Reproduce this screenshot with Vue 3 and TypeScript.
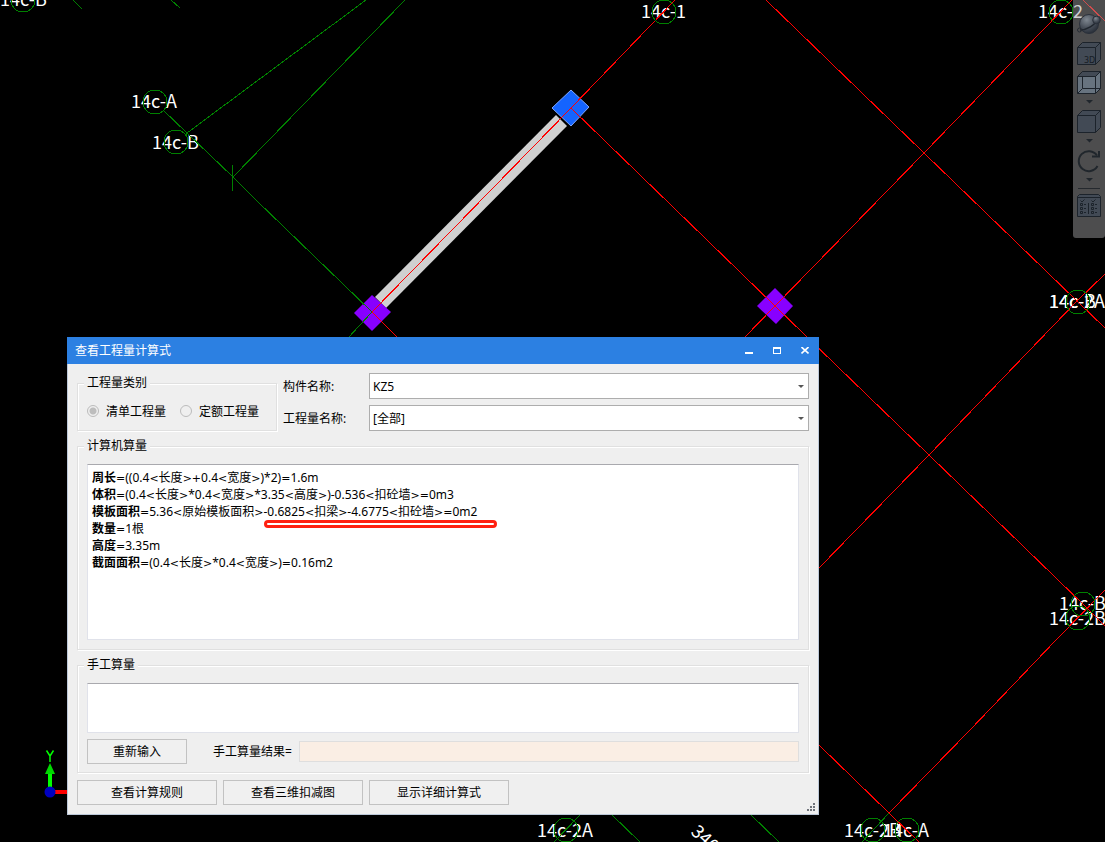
<script setup lang="ts">
import { ref } from 'vue'

interface Formula {
  name: string
  body: string
  marked?: string
}
interface Token {
  text: string
  sign: boolean
}

const component = ref('KZ5')
const quantity = ref('[全部]')
const manual = ref('')
const result = ref('')

const formulas: Formula[] = [
  { name: '周长', body: '=((0.4<长度>+0.4<宽度>)*2)=1.6m' },
  { name: '体积', body: '=(0.4<长度>*0.4<宽度>*3.35<高度>)-0.536<扣砼墙>=0m3' },
  { name: '模板面积', body: '=5.36<原始模板面积>', marked: '-0.6825<扣梁>-4.6775<扣砼墙>=0m2' },
  { name: '数量', body: '=1根' },
  { name: '高度', body: '=3.35m' },
  { name: '截面面积', body: '=(0.4<长度>*0.4<宽度>)=0.16m2' },
]

function tokens(source: string): Token[] {
  return source
    .split(/([<>=+])/)
    .filter((t) => t !== '')
    .map((t) => ({ text: t, sign: /^[<>=+]$/.test(t) }))
}

const redLines = [
  '675,0 571,108 372,312',
  '571,108 775,306 929,455 1087,608 1105,626',
  '372,312 397,337',
  '819,745 889,813 919,842',
  '766,0 924,153 1077,301 1105,328',
  '1072,0 924,153 775,306 744,338',
  '1105,274 1077,301 929,455 819,568',
  '1105,590 1056,640 970,730 889,813',
  '1083,0 1105,21',
]
const greenLines = [
  '366,0 187,133',
  '405,0 233,177',
  '163,110 187,133 233,177 256,200 372,312 348,338',
  '232,165 232,191',
  '185,135 188,133',
  '73,0 82,9',
  '171,0 180,8',
  '580,815 554,842',
  '612,815 640,842',
  '751,815 779,842',
  '889,813 862,842',
]
const circles = [
  [23, 0], [155, 102], [176, 142], [664, 12], [1061, 12], [1078, 302],
  [1083, 604], [1078, 618], [566, 830], [873, 830], [907, 830],
]
const labels = [
  { x: 0, y: 6, text: '14c-B' },
  { x: 131, y: 108, text: '14c-A' },
  { x: 152, y: 149, text: '14c-B' },
  { x: 641, y: 18, text: '14c-1' },
  { x: 1038, y: 18, text: '14c-2' },
  { x: 1049, y: 308, text: '14c-B' },
  { x: 1049, y: 308, text: '14c-2A' },
  { x: 1059, y: 610, text: '14c-B' },
  { x: 1049, y: 625, text: '14c-2B' },
  { x: 537, y: 837, text: '14c-2A' },
  { x: 844, y: 837, text: '14c-2B' },
  { x: 883, y: 837, text: '14c-A' },
]
</script>

<template>
  <main class="stage">
    <svg class="drawing" aria-label="轴网平面图">
      <polygon class="wall" points="556,115 567,126 386,308 375,297" />
      <polygon class="column" points="372,295 391,312 372,331 354,313" />
      <polygon class="column" points="775,288 793,306 776,324 757,306" />
      <polygon class="selected" points="571,90 589,107 571,126 552,108" />
      <text v-for="(l, i) in labels" :key="'t' + i" :x="l.x" :y="l.y" class="axis">{{ l.text }}</text>
      <text class="axis" transform="translate(690 833) rotate(43)">340</text>
      <polyline v-for="p in greenLines" :key="p" :points="p" class="green" />
      <polyline v-for="p in redLines" :key="p" :points="p" class="red" />
      <circle v-for="(c, i) in circles" :key="'c' + i" :cx="c[0]" :cy="c[1]" r="12" class="green" />
      <path d="M50 792H70" stroke="#f00" stroke-width="4" />
      <path d="M50 790V772" stroke="#0f0" stroke-width="4" />
      <path d="M50 763L55 774H45Z" fill="#00d800" />
      <circle cx="50" cy="792" r="5.5" fill="#0000c0" />
      <path d="M46.500 750.500L50 756L53.500 750.500M50 756V762" fill="none" stroke="#0f0" stroke-width="1.500" />
    </svg>

    <nav class="toolbar" aria-label="视图工具">
      <button aria-label="动态观察">
        <svg viewBox="0 0 24 24">
          <defs>
            <radialGradient id="ball" cx="38%" cy="28%" r="75%">
              <stop offset="0" stop-color="#7f8790" />
              <stop offset=".55" stop-color="#4a515b" />
              <stop offset="1" stop-color="#272d37" />
            </radialGradient>
          </defs>
          <circle cx="12" cy="11" r="9.500" fill="url(#ball)" stroke="#2a303a" />
          <path d="M3 17C10 17 18 12 20 7" fill="none" stroke="#20262e" stroke-width="1.500" />
          <circle cx="19.500" cy="7" r="3.800" fill="url(#ball)" stroke="#2a303a" />
          <circle cx="2.500" cy="17" r="2" fill="none" stroke="#262c34" />
        </svg>
      </button>
      <button aria-label="三维">
        <svg viewBox="0 0 24 24">
          <path d="M.5 5.500L5.500.5H23.500V17.500L18.500 22.500H.5Z" class="solid" />
          <path d="M.5 5.500H18.500V22.500M18.500 5.500L23.500.5" class="edge" />
          <text x="7" y="21" class="cube-text">3D</text>
        </svg>
      </button>
      <button aria-label="线框">
        <svg viewBox="0 0 24 24">
          <path d="M.5 5.500L5.500.5H23.500V17.500L18.500 22.500H.5Z" class="glass" />
          <path d="M.5 5.500L5.500.5H23.500L18.500 5.500Z" class="solid" />
          <path d="M.5 5.500H18.500V22.500M18.500 5.500L23.500.5M5.500 5.500V17.500H23.500M.5 22.500L5.500 17.500" class="edge" />
        </svg>
      </button>
      <button class="more" aria-label="线框选项"><svg viewBox="0 0 7 4"><path d="M0 0H7L3.500 3.500Z" /></svg></button>
      <button aria-label="实体">
        <svg viewBox="0 0 24 24">
          <path d="M.5 5.500L5.500.5H23.500V17.500L18.500 22.500H.5Z" class="solid" />
          <path d="M.5 5.500H18.500V22.500M18.500 5.500L23.500.5" class="edge" />
        </svg>
      </button>
      <button class="more" aria-label="实体选项"><svg viewBox="0 0 7 4"><path d="M0 0H7L3.500 3.500Z" /></svg></button>
      <button aria-label="旋转">
        <svg viewBox="0 0 24 24">
          <path d="M20.500 17A10 10 0 1 1 20 6.500" class="turn" />
          <path d="M15 7.500H22V2" class="turn" />
        </svg>
      </button>
      <button class="more" aria-label="旋转选项"><svg viewBox="0 0 7 4"><path d="M0 0H7L3.500 3.500Z" /></svg></button>
      <hr />
      <button aria-label="显示设置">
        <svg viewBox="0 0 24 24">
          <path d="M.5 2.500L2.500.5H21.500L23.500 2.500V22.500H.5Z" class="solid" />
          <path
            class="edge"
            d="M.5 3.500H23.500M11.500 9V20M3.500 6.500L5 8L7.500 5.500M14.500 6.500L16 8L18.500 5.500M3.500 9.500h2v2h-2zM3.500 13.500h2v2h-2zM3.500 17.500h2v2h-2zM14.500 9.500h2v2h-2zM14.500 13.500h2v2h-2zM14.500 17.500h2v2h-2zM7 10.500h2M7 14.500h2M7 18.500h2M18 10.500h2M18 14.500h2M18 18.500h2"
          />
        </svg>
      </button>
    </nav>

    <section class="dialog" role="dialog" aria-labelledby="dialog-title">
      <header class="titlebar">
        <h1 id="dialog-title">查看工程量计算式</h1>
        <button aria-label="最小化"><svg viewBox="0 0 8 8"><path d="M0 5H8V7H0Z" /></svg></button>
        <button aria-label="最大化"><svg viewBox="0 0 8 8"><path fill-rule="evenodd" d="M0 0H8V7H0ZM1 2V6H7V2Z" /></svg></button>
        <button aria-label="关闭">
          <svg viewBox="0 0 8 8"><path d="M.5 0L7.500 6.500M7.500 0L.5 6.500" stroke="#fff" stroke-width="1.600" /></svg>
        </button>
      </header>

      <div class="content">
        <div class="top">
          <fieldset class="kind">
            <legend>工程量类别</legend>
            <div class="radios">
              <label><input type="radio" name="kind" checked disabled /><span>清单工程量</span></label>
              <label><input type="radio" name="kind" disabled /><span>定额工程量</span></label>
            </div>
          </fieldset>
          <label class="caption" for="component">构件名称:</label>
          <div class="combo">
            <select id="component" v-model="component"><option>KZ5</option></select>
          </div>
          <label class="caption" for="quantity">工程量名称:</label>
          <div class="combo">
            <select id="quantity" v-model="quantity"><option>[全部]</option></select>
          </div>
        </div>

        <fieldset>
          <legend>计算机算量</legend>
          <div class="box formulas" tabindex="0">
            <p v-for="f in formulas" :key="f.name">
              <b>{{ f.name }}</b><span v-for="(t, i) in tokens(f.body)" :key="i" :class="{ sign: t.sign }">{{ t.text }}</span><span
                v-if="f.marked"
                class="marked"
              ><span v-for="(t, i) in tokens(f.marked)" :key="i" :class="{ sign: t.sign }">{{ t.text }}</span></span>
            </p>
          </div>
        </fieldset>

        <fieldset class="by-hand">
          <legend id="manual-title">手工算量</legend>
          <textarea v-model="manual" class="box manual" aria-labelledby="manual-title"></textarea>
          <div class="result">
            <button class="btn reset">重新输入</button>
            <label for="result">手工算量结果=</label>
            <input id="result" v-model="result" type="text" readonly />
          </div>
        </fieldset>

        <footer>
          <button class="btn">查看计算规则</button>
          <button class="btn">查看三维扣减图</button>
          <button class="btn">显示详细计算式</button>
        </footer>
      </div>
      <svg class="grip" viewBox="0 0 8 8"><path d="M6 0h2v2h-2zM3 3h2v2h-2zM6 3h2v2h-2zM0 6h2v2h-2zM3 6h2v2h-2zM6 6h2v2h-2z" /></svg>
    </section>
  </main>
</template>

<style>
body {
  margin: 0;
  background: #000;
}
</style>

<style scoped>
.stage {
  position: relative;
  min-height: 100vh;
  overflow: hidden;
  background: #000;
  color: #000;
  font: 12px/16px "Noto Sans", "Noto Sans CJK SC", sans-serif;
}
.stage *,
.stage *::after {
  box-sizing: border-box;
}
button,
select,
input,
textarea {
  margin: 0;
  font: inherit;
  color: inherit;
}
.drawing {
  position: absolute;
  inset: 0;
  width: 100%;
  height: 100%;
}
.axis {
  fill: #fff;
  font: 18px "Noto Sans CJK SC", sans-serif;
}
.green,
.red {
  fill: none;
  stroke: #008000;
  shape-rendering: crispEdges;
}
.red {
  stroke: #f00;
}
.wall {
  fill: #d0d0d0;
}
.column {
  fill: #80f;
}
.selected {
  fill: #1464ff;
  stroke: #7fa6ff;
}

.toolbar {
  position: absolute;
  top: 0;
  right: 0;
  display: flex;
  flex-direction: column;
  align-items: center;
  gap: 5px;
  width: 32px;
  padding: 13px 4px 20px;
  border-radius: 0 0 3px 3px;
  background: rgba(157, 157, 160, 0.49);
}
.toolbar button {
  width: 24px;
  height: 24px;
  padding: 0;
  border: 0;
  background: none;
}
.toolbar svg {
  display: block;
  width: 24px;
  height: 24px;
}
.toolbar .more {
  height: 5px;
}
.toolbar .more svg {
  width: 7px;
  height: 4px;
  margin: 0 auto 1px;
  fill: #20262c;
}
.toolbar hr {
  width: 22px;
  height: 1px;
  margin: 0;
  border: 0;
  background: #25292e;
}
.solid {
  fill: #424a55;
  stroke: #1c232b;
}
.glass {
  fill: #67737f;
  stroke: #1c232b;
}
.edge {
  fill: none;
  stroke: #1c232b;
}
.turn {
  fill: none;
  stroke: #20262c;
  stroke-width: 2;
}
.cube-text {
  fill: #161c24;
  font: 8px "DejaVu Sans", sans-serif;
}

.dialog {
  position: absolute;
  top: 337px;
  left: 67px;
  width: min(752px, calc(100vw - 80px));
  background: #efefef;
}
.titlebar {
  display: flex;
  align-items: center;
  height: 27px;
  padding-left: 8px;
  background: #2c80e2;
  color: #fff;
}
.titlebar h1 {
  flex: 1;
  margin: 0;
  font-size: 12px;
  font-weight: 400;
}
.titlebar button {
  width: 28px;
  height: 27px;
  padding: 0;
  border: 0;
  background: none;
}
.titlebar svg {
  display: block;
  width: 8px;
  height: 8px;
  margin: 0 auto;
  fill: #fff;
}
.content {
  display: flex;
  flex-direction: column;
  gap: 7px;
  padding: 9px;
  border: 1px solid #bcc8d8;
  border-top: 0;
}
.top {
  display: grid;
  grid-template-columns: 200px 80px 1fr;
  grid-template-rows: 26px 26px;
  gap: 6px;
  align-items: center;
}
.caption,
.radios span {
  padding-top: 2px;
}
fieldset {
  min-width: 0;
  margin: 0;
  padding: 10px 9px 9px;
  border: 1px solid #e0e0e0;
  box-shadow: inset 1px 1px #fff, 1px 1px #fff;
}
legend {
  margin-left: -3px;
  padding: 0 3px;
  background: #efefef;
}
.kind {
  grid-row: 1 / 3;
  align-self: end;
}
.by-hand {
  padding-bottom: 8px;
}
.radios {
  display: flex;
  gap: 14px;
}
.radios label {
  display: flex;
  align-items: center;
  gap: 7px;
  height: 20px;
}
.radios input {
  width: 12px;
  height: 12px;
  border: 1px solid #bcbcbc;
  border-radius: 50%;
  appearance: none;
}
.radios input:checked {
  background: radial-gradient(circle, #bdbdbd 3px, transparent 4px);
}
.combo {
  position: relative;
}
.combo::after {
  position: absolute;
  top: 12px;
  right: 5px;
  border: solid transparent;
  border-width: 3px 3px 0;
  border-top-color: #555;
  content: "";
}
select {
  display: block;
  width: 100%;
  height: 26px;
  padding: 2px 16px 0 3px;
  border: 1px solid #adadad;
  border-radius: 0;
  background: #fff;
  appearance: none;
}
.box {
  display: block;
  width: 100%;
  border: 1px solid #e0e2ea;
  border-top-color: #a9a9ae;
  background: #fff;
}
.formulas {
  min-height: 176px;
  padding: 4px;
  line-height: 17px;
  white-space: nowrap;
}
.formulas p {
  height: 17px;
  margin: 0;
}
.sign {
  font: 11px "DejaVu Sans", sans-serif;
}
.marked {
  position: relative;
  display: inline-block;
}
.marked::after {
  position: absolute;
  top: 17px;
  right: -20px;
  left: 0;
  height: 8px;
  border: 3px solid #ff2010;
  border-radius: 4px;
  content: "";
}
.manual {
  height: 50px;
  padding: 4px;
  resize: none;
}
.result {
  display: flex;
  align-items: center;
  margin-top: 6px;
}
.btn {
  width: 140px;
  height: 25px;
  padding: 0;
  border: 1px solid #c2c2c2;
  background: #f0f0f0;
}
.reset {
  width: 100px;
  margin-right: 26px;
}
.result label {
  width: 86px;
}
.result input {
  flex: 1;
  min-width: 0;
  height: 21px;
  padding: 0 4px;
  border: 1px solid #dedede;
  background: #faeee4;
}
footer {
  display: flex;
  gap: 6px;
}
.grip {
  position: absolute;
  right: 4px;
  bottom: 4px;
  width: 8px;
  height: 8px;
  fill: #70747c;
}
</style>
